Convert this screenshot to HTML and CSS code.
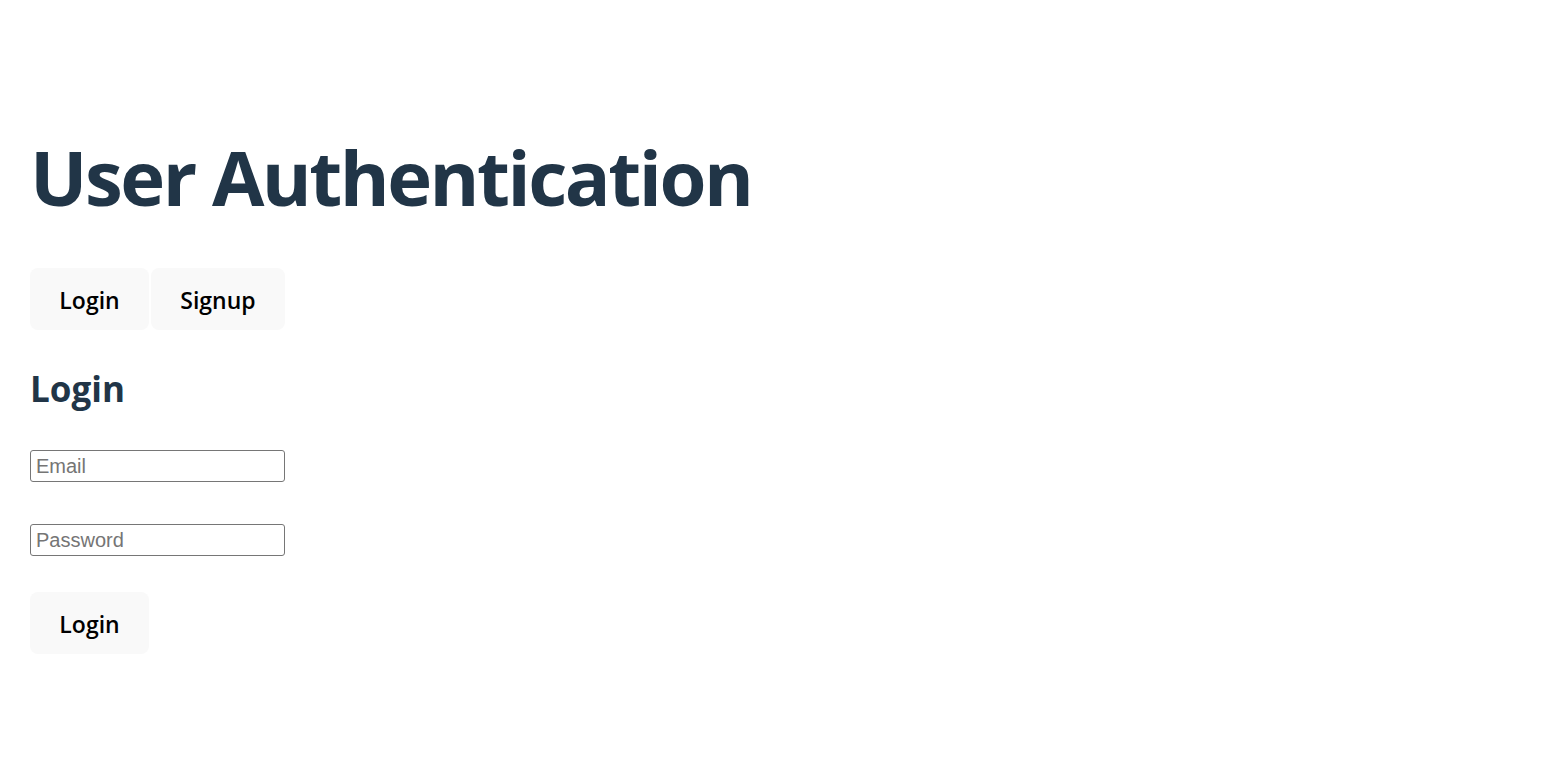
FILE: index.html
```html
<!DOCTYPE html>
<html lang="en">
<head>
<meta charset="utf-8">
<title>User Authentication</title>
<link rel="stylesheet" href="styles.css">
</head>
<body>
<div class="app">
  <h1 class="title">User Authentication</h1>
  <div class="tabs">
    <button class="btn btn-login">Login</button>
    <button class="btn btn-signup">Signup</button>
  </div>
  <h2 class="subtitle">Login</h2>
  <form class="form">
    <input class="field" type="email" placeholder="Email">
    <input class="field" type="password" placeholder="Password">
    <button class="btn btn-login submit" type="button">Login</button>
  </form>
</div>
</body>
</html>
```
FILE: styles.css
```css
* { box-sizing: border-box; }
html, body { margin: 0; background: #ffffff; }
body {
  font-family: "Open Sans", "Noto Sans", sans-serif;
  color: #213547;
}
.app {
  display: flex;
  flex-direction: column;
  align-items: flex-start;
  padding: 0 30px;
}
.title {
  margin: 135px 0 49px;
  font-size: 76px;
  line-height: 84px;
  font-weight: 700;
  letter-spacing: -2.5px;
  color: #213547;
}
.tabs {
  display: flex;
  gap: 2px;
}
.btn {
  height: 62px;
  padding: 2px 0 0;
  border: none;
  border-radius: 8px;
  background: #f9f9f9;
  color: #000000;
  font-family: "Open Sans", "Noto Sans", sans-serif;
  font-size: 23px;
  font-weight: 600;
  cursor: pointer;
}
.btn-login { width: 119px; }
.btn-signup { width: 134px; }
.subtitle {
  margin: 39px 0 41px;
  font-size: 35px;
  line-height: 40px;
  font-weight: 700;
  color: #213547;
}
.form {
  display: flex;
  flex-direction: column;
  align-items: flex-start;
  gap: 42px;
}
.field {
  width: 255px;
  height: 32px;
  padding: 0 5px;
  border: 1px solid #767676;
  border-radius: 3px;
  font-family: "Liberation Sans", Arial, sans-serif;
  font-size: 20px;
  color: #000;
  background: #fff;
}
.field::placeholder { color: #757575; }
.submit { margin-top: -6px; }
```
